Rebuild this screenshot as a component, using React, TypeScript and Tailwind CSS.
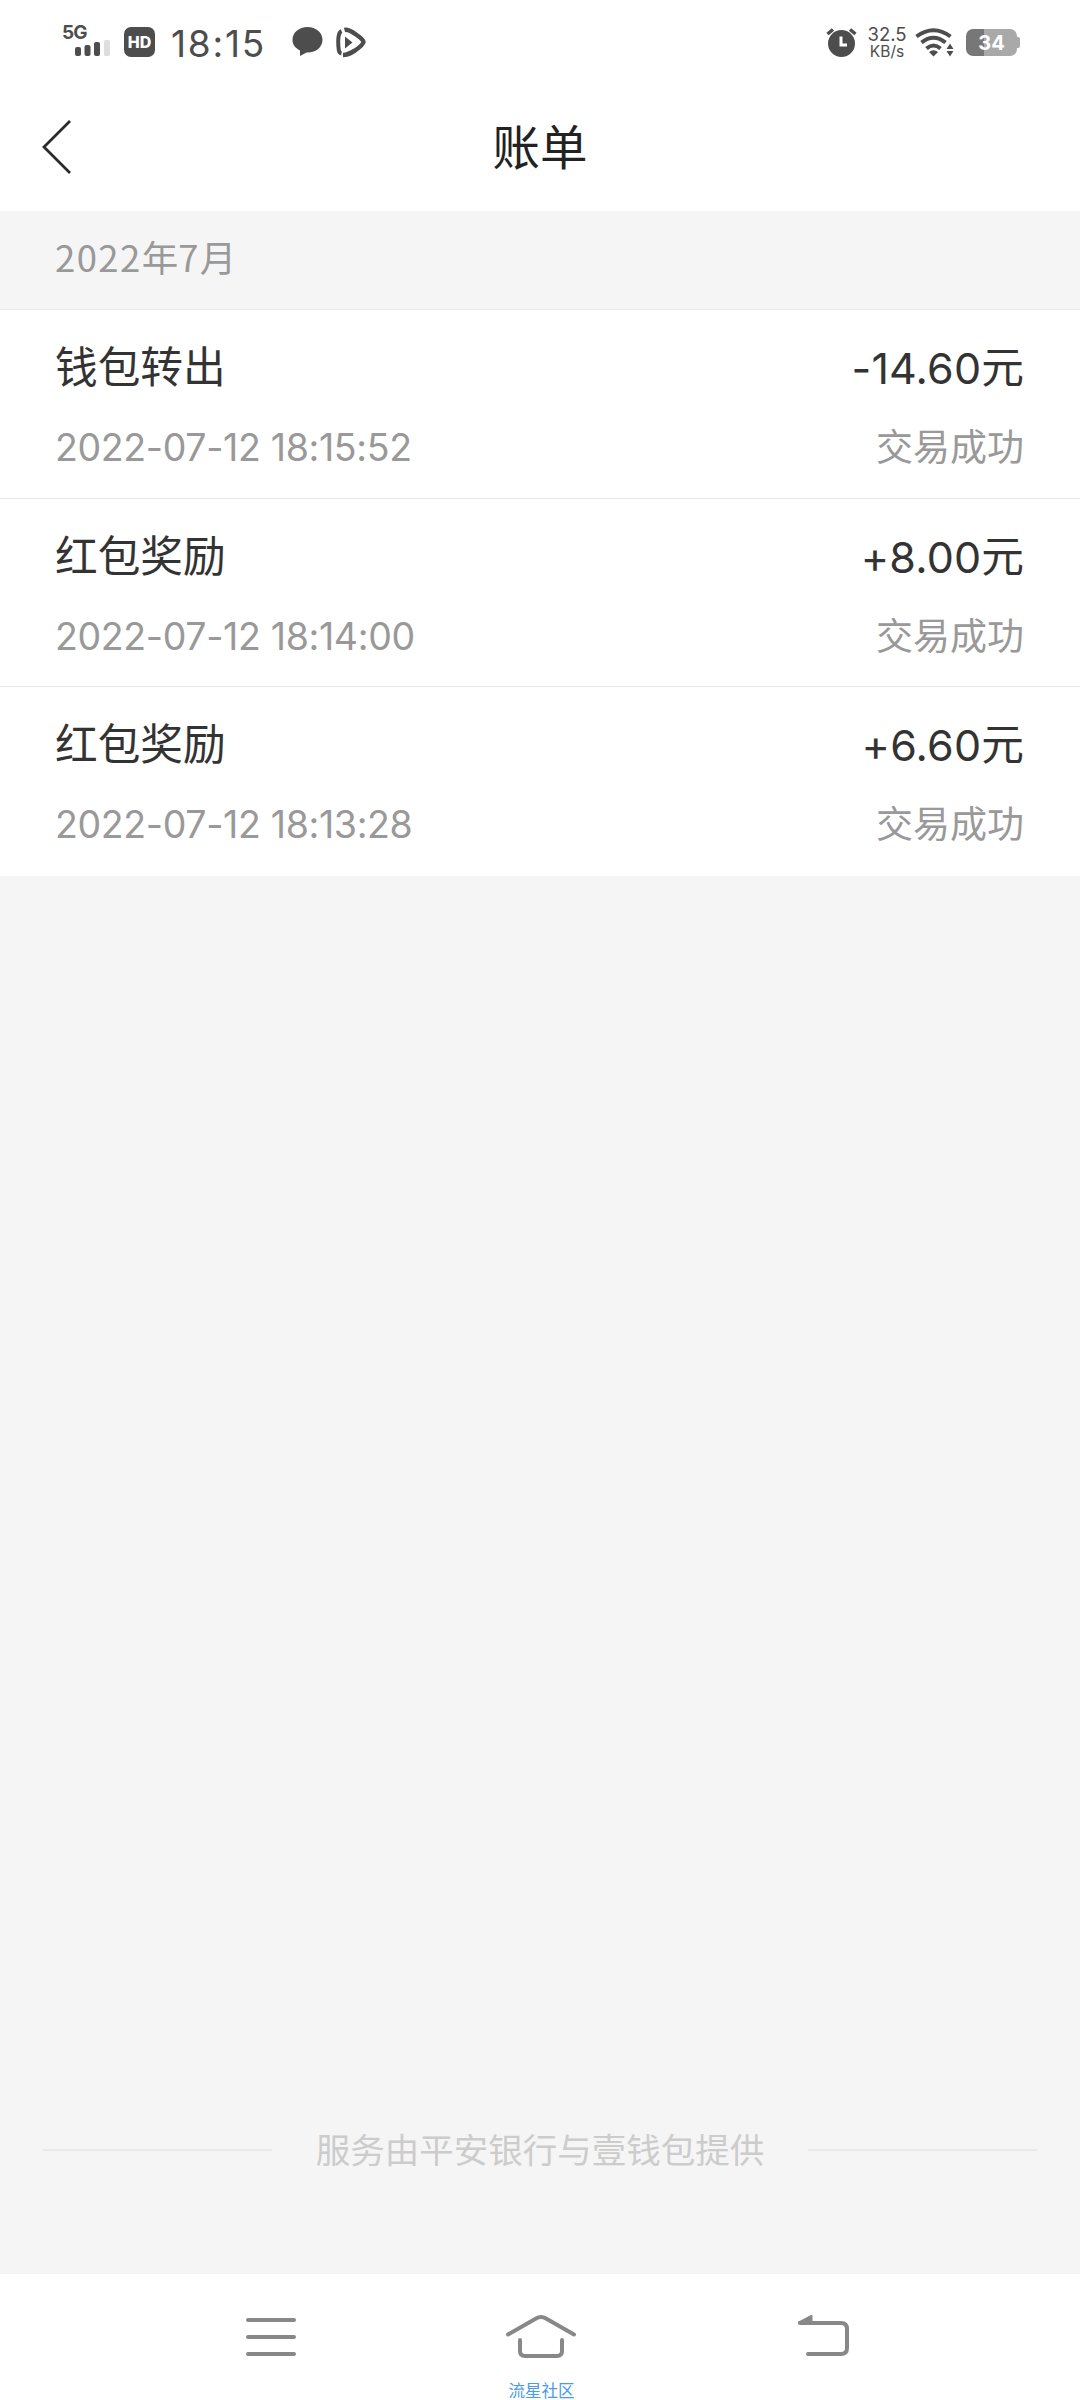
type Bill = {
  id: number;
  title: string;
  time: string;
  amount: string;
  status: string;
};

const bills: Bill[] = [
  { id: 1, title: '钱包转出', time: '2022-07-12 18:15:52', amount: '-14.60', status: '交易成功' },
  { id: 2, title: '红包奖励', time: '2022-07-12 18:14:00', amount: '+8.00', status: '交易成功' },
  { id: 3, title: '红包奖励', time: '2022-07-12 18:13:28', amount: '+6.60', status: '交易成功' },
];

export default function App() {
  return (
    <div className="flex h-[2400px] w-[1080px] flex-col overflow-hidden bg-[#f5f5f5] font-['Inter','Noto_Sans_CJK_SC',sans-serif]">
      <StatusBar />
      <header className="flex h-[121px] shrink-0 items-center bg-white pb-[7px]">
        <button type="button" aria-label="返回" className="flex w-[200px] pl-[41px]">
          <svg width="32" height="56" viewBox="0 0 32 56" fill="none" stroke="#2b2b2b" strokeWidth="2.8">
            <path d="M29 2 3 28 29 54" />
          </svg>
        </button>
        <h1 className="flex-1 pt-[1px] text-center text-[47.5px] leading-[60px] text-[#222]">账单</h1>
        <div className="w-[200px]" />
      </header>

      <div className="h-[99px] shrink-0 border-b border-[#ebebeb] pt-[19px] pl-[55px] font-['Noto_Sans_CJK_SC',sans-serif] text-[36.5px] leading-[54px] text-[#999]">
        <span className="tracking-[1.4px]">2022</span>年<span className="tracking-[1.4px]">7</span>月
      </div>

      <ul className="shrink-0 divide-y divide-[#e6e6e6] bg-white">
        {bills.map((b) => (
          <BillRow key={b.id} bill={b} />
        ))}
      </ul>

      <footer className="mt-auto flex h-[50px] shrink-0 items-center px-[43px] mb-[99px]">
        <div className="h-[2px] flex-1 bg-[#e8e8e8]" />
        <p className="w-[536px] pt-[2px] text-center text-[34.5px] leading-[50px] text-[#ccc]">服务由平安银行与壹钱包提供</p>
        <div className="h-[2px] flex-1 bg-[#e8e8e8]" />
      </footer>

      <NavBar />
    </div>
  );
}

function BillRow({ bill }: { bill: Bill }) {
  return (
    <li className="h-[188.5px] pt-[30px] pr-[56px] pl-[55px]">
      <div className="flex h-[56px] items-center justify-between text-[42.7px] leading-[56px] text-[#333]">
        <span>{bill.title}</span>
        <span className="flex">
          <span className="text-[43px] tracking-[0.2px]">{bill.amount}</span>
          <span>元</span>
        </span>
      </div>
      <div className="mt-[24px] flex h-[56px] items-center justify-between leading-[56px] text-[#999]">
        <span className="text-[37.5px] tracking-[-0.35px]">{bill.time}</span>
        <span className="text-[37px]">{bill.status}</span>
      </div>
    </li>
  );
}

function StatusBar() {
  return (
    <div className="flex h-[90px] shrink-0 items-start bg-white pt-[24px] pl-[62px] text-[#4d4d4d]">
      <div className="w-[50px]">
        <div className="h-[16px] text-[19px] leading-[17px] font-bold tracking-[-0.8px]">5G</div>
        <svg className="ml-[13px]" width="35" height="16" viewBox="0 0 35 16" fill="currentColor">
          <rect x="0" y="7" width="6" height="9" rx="2" />
          <rect x="9.5" y="5" width="6" height="11" rx="2" />
          <rect x="19" y="2" width="6" height="14" rx="2" />
          <rect x="29" y="0" width="6" height="16" rx="1.5" fill="#dedede" />
        </svg>
      </div>
      <div className="mt-[3px] ml-[12px] flex h-[30px] w-[31px] items-center justify-center rounded-[7px] bg-[#4d4d4d] text-[16px] font-extrabold text-white">
        HD
      </div>
      <div className="ml-[16px] w-[94px] text-[37px] leading-[40px] font-normal tracking-[1.8px]">18:15</div>
      <svg className="mt-[3px] ml-[27px]" width="31" height="30" viewBox="0 0 31 30" fill="currentColor">
        <path d="M15.5 0C7 0 .5 5.6.5 12.8c0 4.6 2.500 8.200 7.500 10.700L8 29l6.500-3.500C23.500 26 30.500 20.500 30.500 12.800 30.500 5.600 24 0 15.500 0Z" />
      </svg>
      <svg className="mt-[3px] ml-[13px]" width="31" height="31" viewBox="0 0 31 31" fill="none" stroke="currentColor">
        <path d="M5.500 4Q3.200 5 2.500 10Q1.800 16 2.800 23Q3.200 26 5.500 26.500" strokeWidth="4" />
        <path d="M8.500 3Q12 2 20 7.500Q28 13 27.500 15Q27 18 19 23.500Q12 28 7 28" strokeWidth="4.500" />
        <path d="M9 9.500v12L16.500 15.500Z" fill="currentColor" stroke="none" />
      </svg>

      <svg className="mt-[4px] ml-[459px]" width="31" height="30" viewBox="0 0 31 30" fill="none">
        <circle cx="15.500" cy="15.500" r="13.500" fill="currentColor" />
        <path d="M1.500 6 7 1.500M29.500 6 24 1.500" stroke="currentColor" strokeWidth="3.500" />
        <path d="M15 8.500v8.500h6" stroke="white" strokeWidth="3" />
      </svg>
      <div className="mt-[1px] ml-[7px] flex w-[46px] flex-col items-center">
        <span className="text-[18.5px] leading-[18px]">32.5</span>
        <span className="text-[15.5px] leading-[18px]">KB/s</span>
      </div>
      <svg className="mt-[4px] ml-[5px]" width="39" height="30" viewBox="0 0 39 30" fill="none" stroke="currentColor" strokeWidth="4">
        <path d="M1.500 8.500Q18.500-4 35.500 8.500" />
        <path d="M6.500 14.500Q18.500 5 30.500 14.500" />
        <path d="M11.500 20.500Q18.500 14.500 25.500 20.500" />
        <path d="M14 24Q18.500 20.500 23 24L18.500 28.500Z" fill="currentColor" stroke="none" />
        <path d="M31.500 21 35 15.500 38.500 21ZM31.500 23 35 28.500 38.500 23Z" fill="currentColor" stroke="none" />
      </svg>
      <div className="mt-[5px] ml-[12px] flex items-center">
        <div className="flex h-[27px] w-[51px] items-center justify-center rounded-[7px] bg-linear-to-r from-[#777] from-[36%] to-[#a9a9a9] to-[36%] text-[20px] leading-none font-bold text-white">
          34
        </div>
        <div className="h-[11px] w-[3px] rounded-r-[2px] bg-[#a9a9a9]" />
      </div>
    </div>
  );
}

function NavBar() {
  return (
    <nav className="h-[126px] shrink-0 bg-white pt-[39px] text-[#888]">
      <div className="flex h-[46px] pl-[244px]">
        <svg width="54" height="46" viewBox="0 0 54 46" stroke="currentColor" strokeWidth="4" strokeLinecap="round">
          <path d="M4 7h46M4 24h46M4 41h46" />
        </svg>
        <svg className="ml-[206px]" width="74" height="46" viewBox="0 0 74 46" fill="none" stroke="currentColor" strokeWidth="4" strokeLinecap="round">
          <path d="M4 21.500 32 5.500Q37 2.500 42 5.500L70 21.500" />
          <path d="M16 27v11Q16 43 21 43h32Q58 43 58 38V27" />
        </svg>
        <svg className="ml-[218px]" width="56" height="46" viewBox="0 0 56 46" fill="none" stroke="currentColor" strokeWidth="4" strokeLinecap="round">
          <path d="M4 10h41Q51 10 51 16v19Q51 41 45 41H12" />
          <path d="M3 9.500 15.500 3V10Z" fill="currentColor" strokeWidth="2" strokeLinejoin="round" />
        </svg>
      </div>
      <p className="mt-[24px] pl-[3px] text-center text-[16.5px] leading-[17px] text-[#4a9be8]">流星社区</p>
    </nav>
  );
}
